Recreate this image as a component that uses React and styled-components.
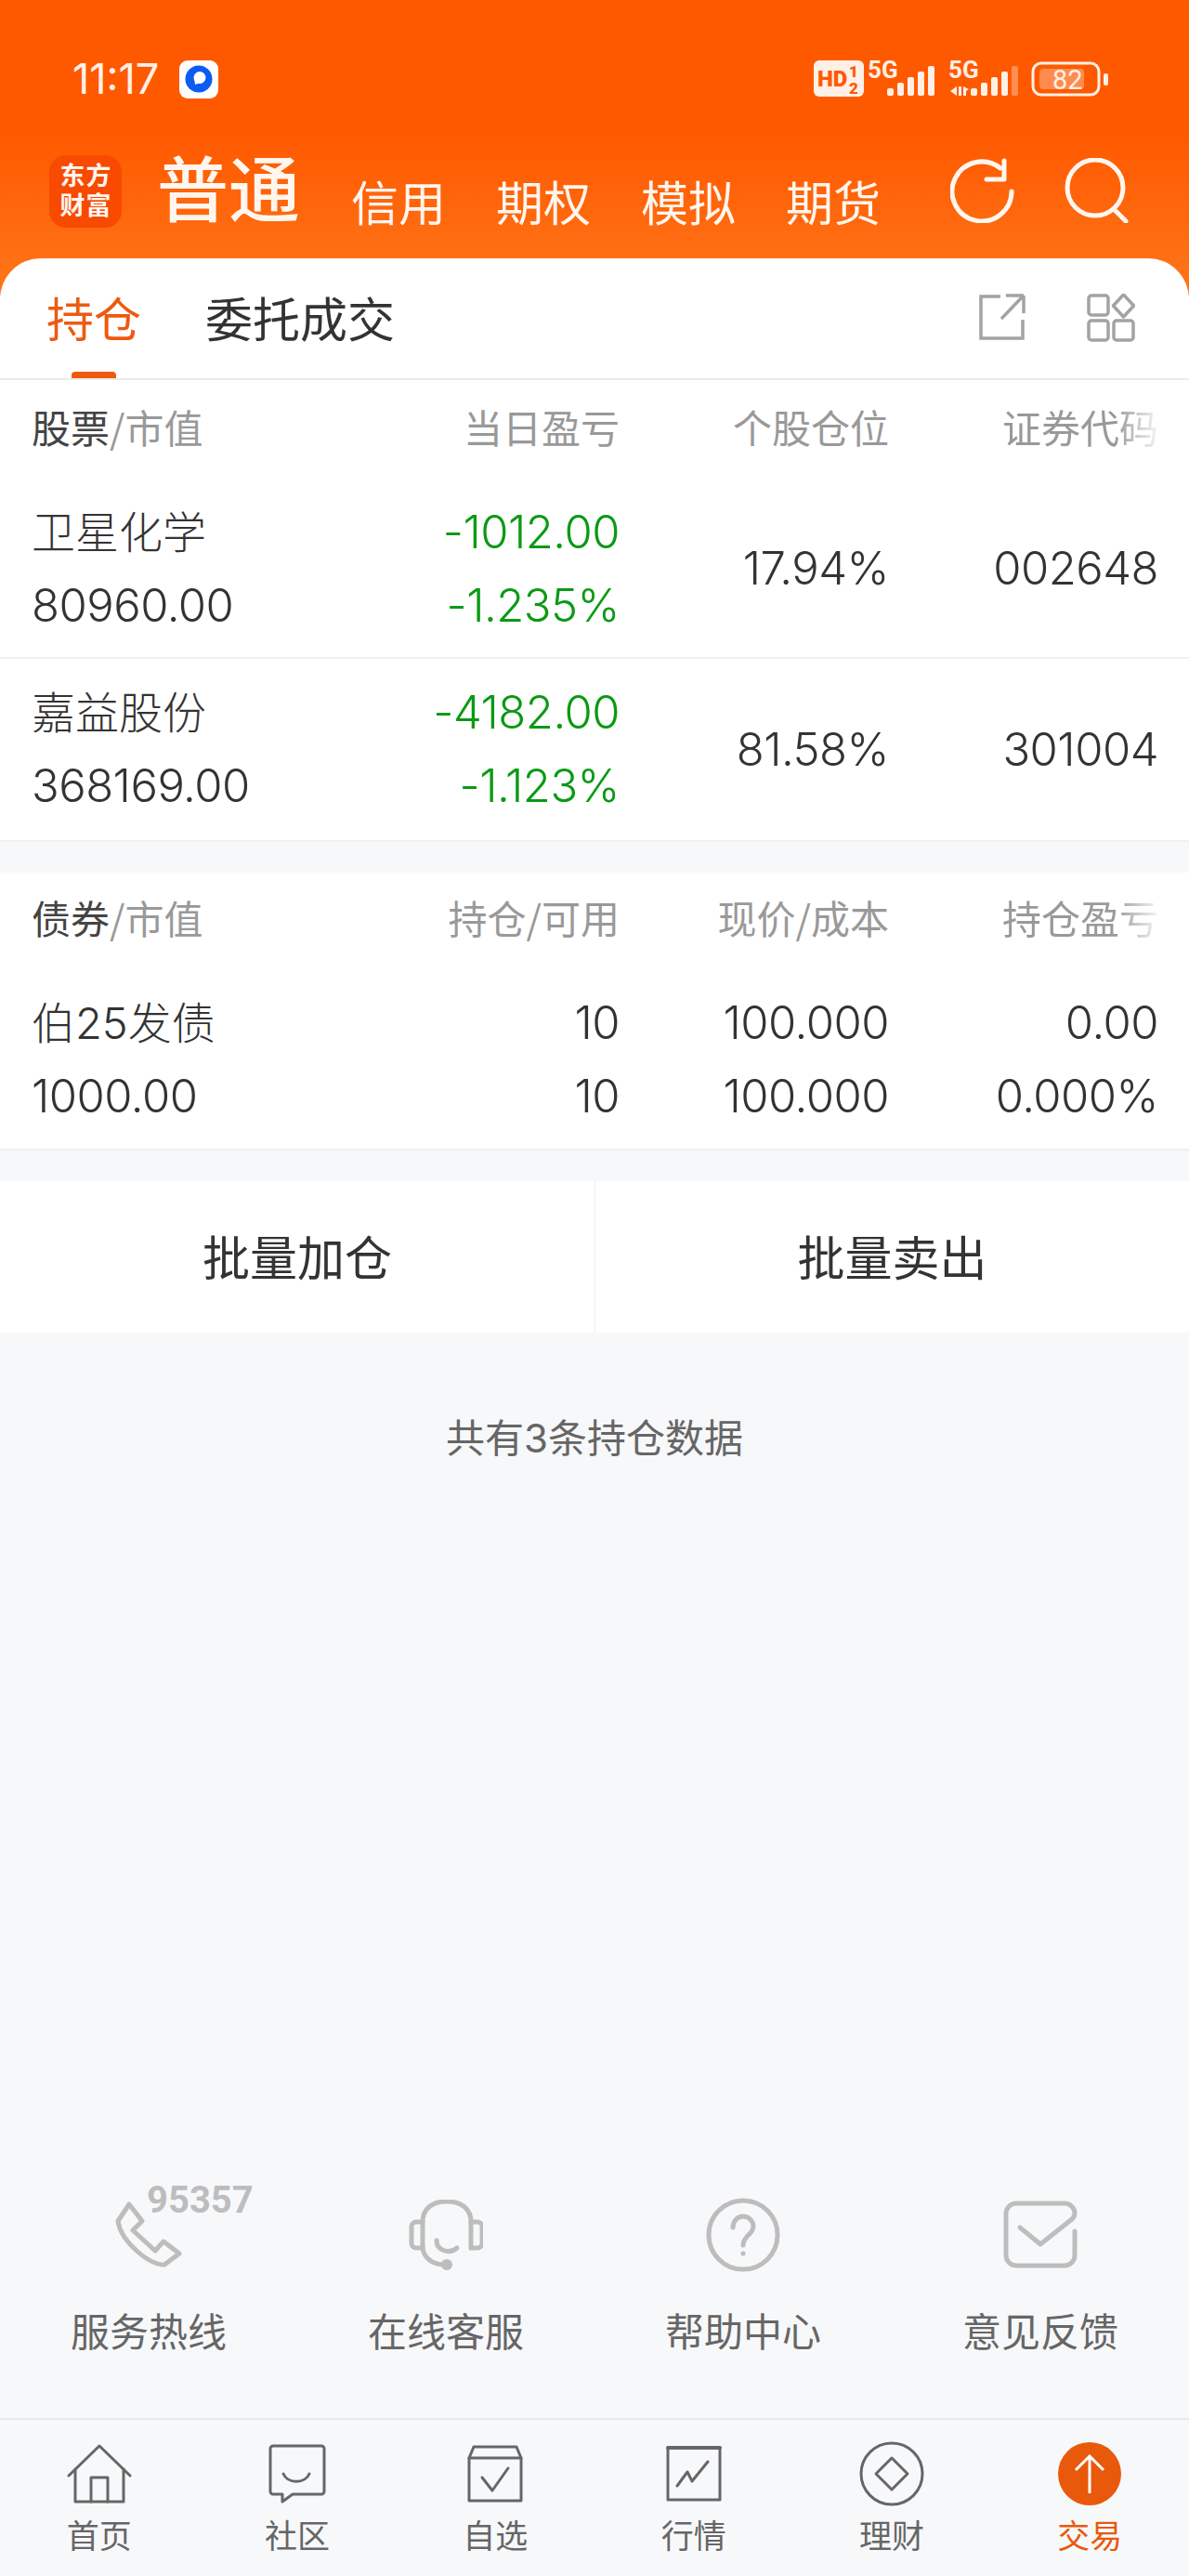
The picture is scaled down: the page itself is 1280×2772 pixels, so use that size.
import styled, { createGlobalStyle } from 'styled-components'

const GlobalStyle = createGlobalStyle`
  html, body {
    margin: 0;
    padding: 0;
    background: #f7f8fa;
  }
  * {
    box-sizing: border-box;
  }
`

const FONT = `Inter, "Noto Sans CJK SC", sans-serif`
const CJK = `"Noto Sans CJK SC", sans-serif`

const Page = styled.div`
  width: 1280px;
  height: 2772px;
  display: flex;
  flex-direction: column;
  background: #f7f8fa;
  font-family: ${FONT};
  color: #333;
  overflow: hidden;
`

const Header = styled.header`
  height: 318px;
  margin-bottom: -40px;
  padding: 64px 0 0;
  background: linear-gradient(180deg, #ff5900 0%, #ff5900 45%, #ff761a 100%);
`

const StatusBar = styled.div`
  height: 42px;
  display: flex;
  align-items: center;
  padding: 0 82px 0 78px;
  color: #fff1e8;
`

const Time = styled.span`
  font-size: 45px;
  line-height: 42px;
  font-weight: 400;
  letter-spacing: 0;
  width: 115px;
`

const AppBadge = styled.div`
  width: 42px;
  height: 41px;
  border-radius: 9px;
  background: #fff;
  display: flex;
  align-items: center;
  justify-content: center;
`

const StatusRight = styled.div`
  margin-left: auto;
  display: flex;
  align-items: center;
`

const HeaderNav = styled.nav`
  display: flex;
  align-items: flex-end;
  height: 80px;
  margin-top: 60px;
  padding-left: 53px;
  color: #fff6ef;
`

const Logo = styled.div`
  width: 78px;
  height: 78px;
  margin-bottom: 1px;
  border-radius: 18px;
  background: #f84a00;
  display: grid;
  grid-template-columns: 28px 28px;
  justify-content: center;
  align-content: center;
  font-family: Roboto, ${CJK};
  font-size: 27px;
  line-height: 32px;
  font-weight: 700;
  text-align: center;
`

const ActiveType = styled.span`
  margin-left: 38px;
  margin-bottom: 6px;
  width: 154px;
  font-size: 77px;
  line-height: 80px;
  font-weight: 500;
  font-family: ${CJK};
`

const TypeLink = styled.span`
  margin-left: ${(p) => p.$gap}px;
  font-size: 51px;
  line-height: 60px;
  font-family: ${CJK};
`

const HeaderIcons = styled.div`
  margin-left: auto;
  padding-right: 64px;
  display: flex;
  gap: 51px;
  align-self: flex-start;
  margin-top: 4px;
`

const Card = styled.section`
  height: 131px;
  border-radius: 44px 44px 0 0;
  background: #fff;
  border-bottom: 2px solid #ebebeb;
  display: flex;
  align-items: flex-start;
  padding: 28px 0 0 50px;
  font-family: ${CJK};
  position: relative;
`

const Tab = styled.div`
  font-size: 51px;
  line-height: 70px;
  color: ${(p) => (p.$active ? '#ed5a10' : '#333')};
  margin-right: 69px;
  height: 101px;
  position: relative;

  &::after {
    content: '';
    display: ${(p) => (p.$active ? 'block' : 'none')};
    position: absolute;
    left: 27px;
    bottom: 0;
    width: 48px;
    height: 7px;
    border-radius: 4px 4px 0 0;
    background: #f05a10;
  }
`

const TabIcons = styled.div`
  margin-left: auto;
  display: flex;
  gap: 66px;
  padding-right: 58px;
  margin-top: 10px;
`

const Section = styled.section`
  background: #fff;
  margin-bottom: ${(p) => p.$gap}px;
  border-bottom: 2px solid #f0f0f0;
`

const Columns = styled.div`
  display: grid;
  grid-template-columns: 1fr 290px 290px 290px;
  padding: 0 33px 0 34px;
  align-items: center;
`

const HeadRow = styled(Columns)`
  height: ${(p) => p.$height}px;
  font-size: 42px;
  font-family: ${CJK};
  color: #999;
  padding-top: ${(p) => p.$pad}px;
`

const HeadCell = styled.div`
  text-align: right;
  white-space: nowrap;
  ${(p) =>
    p.$fade &&
    `-webkit-mask-image: linear-gradient(90deg, #000 0, #000 ${p.$fade}%, rgba(0,0,0,.1) 100%);
     mask-image: linear-gradient(90deg, #000 0, #000 ${p.$fade}%, rgba(0,0,0,.1) 100%);
     justify-self: end;`}
`

const HeadName = styled.div`
  white-space: nowrap;

  b {
    font-weight: 400;
    color: #444;
  }
`

const Row = styled(Columns)`
  height: ${(p) => p.$height}px;
  padding-top: ${(p) => p.$pad || 0}px;
  border-bottom: ${(p) => (p.$line ? '2px solid #f0f0f0' : 'none')};
`

const Stack = styled.div`
  display: flex;
  flex-direction: column;
  gap: ${(p) => p.$gap}px;
  align-items: ${(p) => (p.$right ? 'flex-end' : 'flex-start')};
  color: ${(p) => (p.$green ? '#0a9a14' : '#333')};
`

const Line = styled.div`
  font-size: 49px;
  line-height: 60px;
  font-weight: 300;
  white-space: nowrap;
  letter-spacing: -0.5px;
`

const Name = styled(Line)`
  font-size: 47px;
  letter-spacing: 0;
`

const Value = styled(Line)`
  text-align: right;
`

const Actions = styled.div`
  height: 163px;
  background: #fff;
  display: grid;
  grid-template-columns: 1fr 1fr;
`

const ActionBtn = styled.div`
  display: flex;
  align-items: center;
  justify-content: center;
  padding-bottom: 4px;
  font-size: 51px;
  font-family: ${CJK};
  color: #333;
  border-left: ${(p) => (p.$split ? '1px solid #f0f0f0' : 'none')};
`

const Summary = styled.div`
  margin-top: 84px;
  text-align: center;
  font-size: 42px;
  line-height: 60px;
  color: #666;
`

const Services = styled.div`
  margin-top: auto;
  height: 248px;
  display: grid;
  grid-template-columns: repeat(4, 1fr);
`

const Service = styled.div`
  display: flex;
  flex-direction: column;
  align-items: center;
  font-family: ${CJK};
  font-size: 42px;
  line-height: 60px;
  color: #666;
  position: relative;
`

const ServiceIcon = styled.div`
  height: 80px;
  margin-top: 11px;
  margin-bottom: 32px;
  display: flex;
  align-items: center;
`

const Hotline = styled.span`
  position: absolute;
  left: 158px;
  top: -6px;
  font-family: Roboto, sans-serif;
  font-size: 40px;
  line-height: 40px;
  font-weight: 700;
  color: #bdbdbd;
`

const TabBar = styled.nav`
  height: 170px;
  border-top: 2px solid #e8e9ec;
  display: grid;
  grid-template-columns: repeat(6, 1fr);
`

const NavItem = styled.div`
  display: flex;
  flex-direction: column;
  align-items: center;
  padding-top: 23px;
  font-family: ${CJK};
  font-size: 35px;
  line-height: 44px;
  color: ${(p) => (p.$active ? '#e8590c' : '#666')};
`

const NavIcon = styled.div`
  height: 70px;
  margin-bottom: 8px;
  display: flex;
  align-items: center;
  justify-content: center;
`

// status bar drawings
const AppDot = () => (
  <svg width="30" height="30" viewBox="0 0 30 30">
    <circle cx="15" cy="15" r="14.5" fill="#0b5cf0" />
    <circle cx="16" cy="13.5" r="6.5" fill="#fff" />
    <path d="M10 13l1 8 6-2z" fill="#fff" />
  </svg>
)

const StatusIcons = () => (
  <svg width="322" height="52" viewBox="0 -4 322 52" fill="#fff0e6">
    <rect x="0" y="2" width="54" height="39" rx="6" />
    <g fill="#ff5900" fontFamily="Roboto, sans-serif" fontWeight="900">
      <text x="4" y="30" fontSize="24">HD</text>
      <text x="38" y="20" fontSize="17">1</text>
      <text x="38" y="38" fontSize="17">2</text>
    </g>
    <g fontFamily="Roboto, sans-serif" fontWeight="700" fontSize="26">
      <text x="58" y="21">5G</text>
      <text x="145" y="21">5G</text>
    </g>
    <g>
      <rect x="79" y="32" width="7" height="8" rx="2" />
      <rect x="90" y="26" width="7" height="14" rx="2" />
      <rect x="101" y="20" width="7" height="20" rx="2" />
      <rect x="112" y="14" width="7" height="26" rx="2" />
      <rect x="123" y="8" width="7" height="32" rx="2" />
      <path d="M147 35l7-5v10zM156 30h3v10h-3zM161 30l6 3-3 2v5h-3z" />
      <rect x="169" y="32" width="7" height="8" rx="2" />
      <rect x="180" y="26" width="7" height="14" rx="2" />
      <rect x="191" y="20" width="7" height="20" rx="2" />
      <rect x="202" y="14" width="7" height="26" rx="2" />
      <rect x="213" y="8" width="7" height="32" rx="2" opacity=".35" />
    </g>
    <g transform="translate(3 0)">
      <rect x="233" y="5" width="71" height="34" rx="9" fill="none" stroke="#fff0e6" strokeWidth="3" />
      <rect x="240" y="11" width="48" height="22" rx="4" fill="#ff8c4d" />
      <text x="254" y="33" fontSize="29" fontFamily="Roboto, sans-serif">82</text>
      <rect x="309" y="16" width="5" height="13" rx="2" />
    </g>
  </svg>
)

const Refresh = () => (
  <svg width="70" height="70" viewBox="0 0 70 70" fill="none" stroke="#fff6ef" strokeWidth="5" strokeLinecap="round" strokeLinejoin="round">
    <path d="M54 11A32 32 0 1 0 66 36" />
    <path d="M58 3v20H39" />
  </svg>
)

const Search = () => (
  <svg width="72" height="70" viewBox="0 0 72 70" fill="none" stroke="#fff6ef" strokeWidth="5" strokeLinecap="round">
    <circle cx="35" cy="32" r="30" />
    <path d="M55 55l13 13" />
  </svg>
)

const ShareIcon = () => (
  <svg width="50" height="50" viewBox="0 0 50 50" fill="none" stroke="#a3a3a3" strokeWidth="3.5">
    <path d="M23 3H2v45h45V28" />
    <path d="M48 2H29M48 2v19M47 3L24 27" />
  </svg>
)

const GridIcon = () => (
  <svg width="52" height="52" viewBox="0 0 52 52" fill="none" stroke="#a3a3a3" strokeWidth="3.5">
    <rect x="2" y="2" width="21" height="21" rx="3" />
    <rect x="2" y="29" width="21" height="21" rx="3" />
    <rect x="29" y="29" width="21" height="21" rx="3" />
    <path d="M39.5 1l11 12-11 12-11-12z" strokeLinejoin="round" />
  </svg>
)

const PhoneIcon = () => (
  <svg width="72" height="72" viewBox="0 0 72 72" fill="none" stroke="#bdbdbd" strokeWidth="5" strokeLinejoin="round">
    <path d="M15 3L29 21 19 31 43 53 52 43 69 56 53 68C36 68 6 43 3 21z" />
  </svg>
)

const HeadsetIcon = () => (
  <svg width="80" height="76" viewBox="0 0 80 76" fill="none" stroke="#bdbdbd" strokeWidth="5" strokeLinecap="round" strokeLinejoin="round">
    <path d="M15 50V24C15 10 25 2 41 2s26 8 26 22v28" />
    <path d="M15 50c0 12 10 20 24 20" />
    <path d="M15 24H8a5 5 0 0 0-5 5v18a5 5 0 0 0 5 5h7M67 24h7a5 5 0 0 1 5 5v18a5 5 0 0 1-5 5h-7" />
    <path d="M30 44c0 11 14 15 22 8" />
    <circle cx="41" cy="70" r="6" fill="#bdbdbd" stroke="none" />
  </svg>
)

const HelpIcon = () => (
  <svg width="80" height="80" viewBox="0 0 80 80" fill="none" stroke="#bdbdbd" strokeWidth="5" strokeLinecap="round">
    <circle cx="40" cy="40" r="37" />
    <path d="M29 32c0-7 5-12 11-12s11 5 11 11c0 8-11 10-11 20" />
    <circle cx="40" cy="60" r="2.5" fill="#bdbdbd" stroke="none" />
  </svg>
)

const MailIcon = () => (
  <svg width="80" height="74" viewBox="0 0 80 74" fill="none" stroke="#bdbdbd" strokeWidth="5" strokeLinecap="round" strokeLinejoin="round">
    <path d="M77 33V59a11 11 0 0 1-11 11H14A11 11 0 0 1 3 59V14A11 11 0 0 1 14 3H66a11 11 0 0 1 11 11c0 3-1 4-3 6L40 47 18 29" />
  </svg>
)

const navStroke = { fill: 'none', stroke: '#666', strokeWidth: 3, strokeLinejoin: 'round', strokeLinecap: 'round' }

const HomeIcon = () => (
  <svg width="70" height="64" viewBox="0 0 70 64" {...navStroke}>
    <path d="M2 34L35 2l33 32" />
    <path d="M9 27v35h17V36h18v26h17V27" />
    <path d="M26 62h18" />
  </svg>
)

const ChatIcon = () => (
  <svg width="62" height="64" viewBox="0 0 62 64" {...navStroke}>
    <path d="M5 2h52a3 3 0 0 1 3 3v46a3 3 0 0 1-3 3H26l-11 8v-8H5a3 3 0 0 1-3-3V5a3 3 0 0 1 3-3z" />
    <path d="M16 32c5 11 23 11 28 0" />
  </svg>
)

const PickIcon = () => (
  <svg width="60" height="62" viewBox="0 0 60 62" {...navStroke}>
    <path d="M2 14L7 2h46l5 12v46H2z" />
    <path d="M2 14h56" />
    <path d="M16 35l11 14 17-24" />
  </svg>
)

const QuoteIcon = () => (
  <svg width="60" height="62" viewBox="0 0 60 62" {...navStroke}>
    <rect x="2" y="3" width="56" height="56" />
    <path d="M2 3h56" strokeWidth="4" />
    <path d="M12 44l11-15 5 10 17-21" />
  </svg>
)

const WealthIcon = () => (
  <svg width="70" height="70" viewBox="0 0 70 70" {...navStroke}>
    <circle cx="35" cy="35" r="33" />
    <path d="M35 18l17 17-17 17-17-17z" />
  </svg>
)

const TradeIcon = () => (
  <svg width="68" height="68" viewBox="0 0 68 68">
    <circle cx="34" cy="34" r="34" fill="#e8590c" />
    <path d="M34 55V16M19 30l15-15 15 15" fill="none" stroke="#fff" strokeWidth="3" />
  </svg>
)

const services = [
  { label: '服务热线', Icon: PhoneIcon, hotline: '95357' },
  { label: '在线客服', Icon: HeadsetIcon },
  { label: '帮助中心', Icon: HelpIcon },
  { label: '意见反馈', Icon: MailIcon },
]

const tabs = [
  { label: '首页', Icon: HomeIcon },
  { label: '社区', Icon: ChatIcon },
  { label: '自选', Icon: PickIcon },
  { label: '行情', Icon: QuoteIcon },
  { label: '理财', Icon: WealthIcon },
  { label: '交易', Icon: TradeIcon, active: true },
]

const stocks = [
  { name: '卫星化学', value: '80960.00', pnl: '-1012.00', rate: '-1.235%', weight: '17.94%', code: '002648' },
  { name: '嘉益股份', value: '368169.00', pnl: '-4182.00', rate: '-1.123%', weight: '81.58%', code: '301004' },
]

export default function App() {
  return (
    <Page>
      <GlobalStyle />
      <Header>
        <StatusBar>
          <Time>11:17</Time>
          <AppBadge>
            <AppDot />
          </AppBadge>
          <StatusRight>
            <StatusIcons />
          </StatusRight>
        </StatusBar>
        <HeaderNav>
          <Logo>
            <span>东</span>
            <span>方</span>
            <span>财</span>
            <span>富</span>
          </Logo>
          <ActiveType>普通</ActiveType>
          <TypeLink $gap={55}>信用</TypeLink>
          <TypeLink $gap={54}>期权</TypeLink>
          <TypeLink $gap={54}>模拟</TypeLink>
          <TypeLink $gap={54}>期货</TypeLink>
          <HeaderIcons>
            <Refresh />
            <Search />
          </HeaderIcons>
        </HeaderNav>
      </Header>

      <Card>
        <Tab $active>持仓</Tab>
        <Tab>委托成交</Tab>
        <TabIcons>
          <ShareIcon />
          <GridIcon />
        </TabIcons>
      </Card>

      <Section $gap={33}>
        <HeadRow $height={92} $pad={6}>
          <HeadName>
            <b>股票</b>/市值
          </HeadName>
          <HeadCell>当日盈亏</HeadCell>
          <HeadCell>个股仓位</HeadCell>
          <HeadCell $fade={72}>证券代码</HeadCell>
        </HeadRow>
        {stocks.map((s, i) => (
          <Row key={s.code} $height={i === 0 ? 208 : 195} $pad={i === 0 ? 16 : 0} $line={i === 0}>
            <Stack $gap={19}>
              <Name>{s.name}</Name>
              <Line>{s.value}</Line>
            </Stack>
            <Stack $gap={19} $right $green>
              <Value>{s.pnl}</Value>
              <Value>{s.rate}</Value>
            </Stack>
            <Value>{s.weight}</Value>
            <Value>{s.code}</Value>
          </Row>
        ))}
      </Section>

      <Section $gap={33}>
        <HeadRow $height={94} $pad={0}>
          <HeadName>
            <b>债券</b>/市值
          </HeadName>
          <HeadCell>持仓/可用</HeadCell>
          <HeadCell>现价/成本</HeadCell>
          <HeadCell $fade={72}>持仓盈亏</HeadCell>
        </HeadRow>
        <Row $height={203} $pad={12}>
          <Stack $gap={19}>
            <Name>伯25发债</Name>
            <Line>1000.00</Line>
          </Stack>
          <Stack $gap={19} $right>
            <Value>10</Value>
            <Value>10</Value>
          </Stack>
          <Stack $gap={19} $right>
            <Value>100.000</Value>
            <Value>100.000</Value>
          </Stack>
          <Stack $gap={19} $right>
            <Value>0.00</Value>
            <Value>0.000%</Value>
          </Stack>
        </Row>
      </Section>

      <Actions>
        <ActionBtn>批量加仓</ActionBtn>
        <ActionBtn $split>批量卖出</ActionBtn>
      </Actions>

      <Summary>共有3条持仓数据</Summary>

      <Services>
        {services.map(({ label, Icon, hotline }) => (
          <Service key={label}>
            {hotline && <Hotline>{hotline}</Hotline>}
            <ServiceIcon>
              <Icon />
            </ServiceIcon>
            {label}
          </Service>
        ))}
      </Services>

      <TabBar>
        {tabs.map(({ label, Icon, active }) => (
          <NavItem key={label} $active={active}>
            <NavIcon>
              <Icon />
            </NavIcon>
            {label}
          </NavItem>
        ))}
      </TabBar>
    </Page>
  )
}
